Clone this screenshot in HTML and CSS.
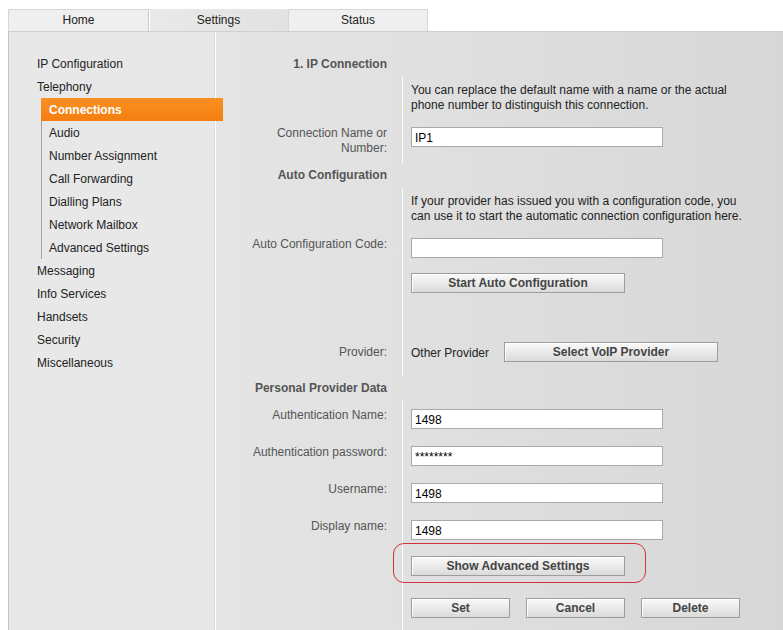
FILE: index.html
```html
<!DOCTYPE html>
<html lang="en">
<head>
<meta charset="utf-8">
<title>Settings - Connections</title>
<link rel="stylesheet" href="styles.css">
</head>
<body>
<div class="tabs">
  <div class="tab">Home</div>
  <div class="tab tab-active">Settings</div>
  <div class="tab">Status</div>
</div>
<div class="panel">
  <nav class="sidebar">
    <ul class="menu">
      <li class="menu-item">IP Configuration</li>
      <li class="menu-item">Telephony</li>
      <li class="menu-group">
        <ul class="submenu">
          <li class="sub-item active">Connections</li>
          <li class="sub-item">Audio</li>
          <li class="sub-item">Number Assignment</li>
          <li class="sub-item">Call Forwarding</li>
          <li class="sub-item">Dialling Plans</li>
          <li class="sub-item">Network Mailbox</li>
          <li class="sub-item">Advanced Settings</li>
        </ul>
      </li>
      <li class="menu-item">Messaging</li>
      <li class="menu-item">Info Services</li>
      <li class="menu-item">Handsets</li>
      <li class="menu-item">Security</li>
      <li class="menu-item">Miscellaneous</li>
    </ul>
  </nav>
  <main class="content">
    <div class="row row-head"><div class="label">1. IP Connection</div><div class="value"></div></div>
    <div class="row row-desc"><div class="label"></div><div class="value">You can replace the default name with a name or the actual<br>phone number to distinguish this connection.</div></div>
    <div class="row row-field row-name"><div class="label">Connection Name or<br>Number:</div><div class="value"><input class="field" type="text" value="IP1"></div></div>
    <div class="row row-head"><div class="label">Auto Configuration</div><div class="value"></div></div>
    <div class="row row-desc row-desc2"><div class="label"></div><div class="value">If your provider has issued you with a configuration code, you<br>can use it to start the automatic connection configuration here.</div></div>
    <div class="row row-field"><div class="label">Auto Configuration Code:</div><div class="value"><input class="field" type="text" value=""></div></div>
    <div class="row row-btn row-start"><div class="label"></div><div class="value"><button class="btn btn-wide">Start Auto Configuration</button></div></div>
    <div class="row row-provider"><div class="label">Provider:</div><div class="value"><span class="provider-name">Other Provider</span><button class="btn btn-wide">Select VoIP Provider</button></div></div>
    <div class="row row-head"><div class="label">Personal Provider Data</div><div class="value"></div></div>
    <div class="row row-field"><div class="label">Authentication Name:</div><div class="value"><input class="field" type="text" value="1498"></div></div>
    <div class="row row-field"><div class="label">Authentication password:</div><div class="value"><input class="field" type="text" value="********"></div></div>
    <div class="row row-field"><div class="label">Username:</div><div class="value"><input class="field" type="text" value="1498"></div></div>
    <div class="row row-field"><div class="label">Display name:</div><div class="value"><input class="field" type="text" value="1498"></div></div>
    <div class="row row-btn row-adv"><div class="label"></div><div class="value"><button class="btn btn-wide btn-marked">Show Advanced Settings</button></div></div>
    <div class="row row-btn row-actions"><div class="label"></div><div class="value actions"><button class="btn btn-small">Set</button><button class="btn btn-small">Cancel</button><button class="btn btn-small">Delete</button></div></div>
  </main>
</div>
</body>
</html>
```

FILE: styles.css
```css
* { box-sizing: border-box; }
html, body { margin: 0; padding: 0; background: #fff; }
body {
  font-family: "Liberation Sans", Arial, sans-serif;
  font-size: 12px;
  color: #222;
  padding: 9px 0 0 8px;
  overflow: hidden;
  height: 630px;
}

.tabs { display: flex; height: 22px; }
.tab {
  width: 140px;
  height: 22px;
  line-height: 21px;
  text-align: center;
  background: #efefef;
  border: 1px solid #d6d6d6;
  border-bottom: none;
  border-right: none;
  color: #222;
}
.tab:last-child { border-right: 1px solid #d6d6d6; }
.tab-active {
  width: 140px;
  background: linear-gradient(to right, #e9e9e9, #e2e2e2);
  border-left: 1px solid #c8c8c8;
  border-top: 1px solid #e6e6e6;
  box-shadow: inset 1px 0 0 #fff;
}

.panel {
  display: flex;
  border-top: 1px solid #d0d0d0;
  min-height: 620px;
}

.sidebar {
  width: 207px;
  flex: none;
  background: #e8e8e8;
  border-left: 1px solid #c6c6c6;
  border-right: 1px solid #dedede;
  padding-top: 20px;
}
.menu, .submenu { list-style: none; margin: 0; padding: 0; }
.menu-item { height: 23px; line-height: 23px; padding-top: 1px; padding-left: 28px; color: #222; }
.submenu { margin-left: 32px; border-left: 1px solid #a0a0a0; }
.sub-item { height: 23px; line-height: 23px; padding-top: 1px; padding-left: 7px; color: #222; }
.sub-item.active {
  position: relative;
  z-index: 1;
  margin-left: -1px;
  padding-left: 8px;
  width: 182px;
  color: #fff;
  font-weight: bold;
  background: linear-gradient(#fb8f22, #f47f10);
}

.content {
  flex: 1;
  border-left: 1px solid #fff;
  background: linear-gradient(to right, #e5e5e5, #d7d7d7);
  padding-top: 20px;
}

.row { display: grid; grid-template-columns: 186px 1fr; }
.label {
  text-align: right;
  padding-right: 15px;
  color: #555;
  line-height: 15px;
}
.value { border-left: 1px solid #fff; padding-left: 8px; }

.row-head { height: 25px; }
.row-head .label { font-weight: bold; padding-top: 5px; line-height: 14px; }
.row-head .value { border-left-color: transparent; }

.row-desc { height: 41px; }
.row-desc2 { height: 42px; }
.row-desc .value { padding-top: 6px; line-height: 15px; color: #222; }

.row-field { height: 37px; }
.row-field .label { padding-top: 7px; }
.row-field .value { padding-top: 8px; }
.row-name { height: 45px; }
.row-name .label { padding-top: 8px; }
.row-name .value { padding-top: 9px; }

.row-start { height: 63px; }
.row-start .value { padding-top: 6px; }

.row-provider { height: 46px; }
.row-provider .label { padding-top: 15px; }
.row-provider .value { padding-top: 12px; display: flex; align-items: flex-start; }
.provider-name { width: 93px; color: #222; line-height: 20px; padding-top: 1px; }

.row-adv { height: 40px; }
.row-adv .value { padding-top: 7px; }
.row-actions { height: 60px; }
.row-actions .value { padding-top: 9px; }
.actions { display: flex; gap: 16px; }

.field {
  display: block;
  width: 252px;
  height: 20px;
  margin: 0;
  border: 1px solid #a9a9a9;
  background: #fff;
  padding: 1px 3px 0;
  font-family: "Liberation Sans", Arial, sans-serif;
  font-size: 12px;
  color: #000;
  outline: none;
}

.btn {
  display: block;
  height: 20px;
  margin: 0;
  padding: 1px 0 0;
  border: 1px solid #9d9d9d;
  background: linear-gradient(#f9f9f9 0%, #ececec 45%, #dadada 100%);
  box-shadow: inset 1px 1px 0 #fff;
  font-family: "Liberation Sans", Arial, sans-serif;
  font-size: 12px;
  font-weight: bold;
  color: #444;
  text-align: center;
  line-height: 17px;
}
.btn-wide { width: 214px; }
.btn-small { width: 99px; }

.btn-marked { position: relative; }
.btn-marked::after {
  content: "";
  position: absolute;
  left: -19px;
  right: -22px;
  top: -14px;
  bottom: -8px;
  border: 1px solid #d2323c;
  border-radius: 11px;
}
```
